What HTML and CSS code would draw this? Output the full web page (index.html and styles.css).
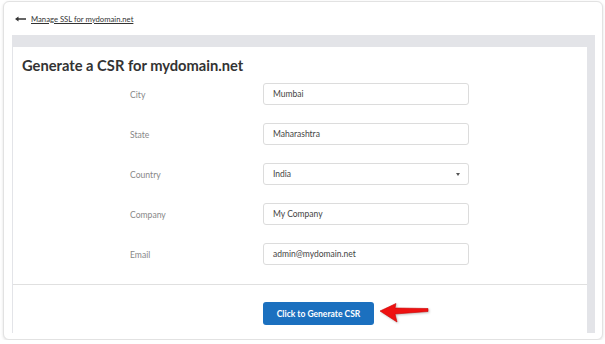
FILE: index.html
```html
<!DOCTYPE html>
<html lang="en">
<head>
  <meta charset="UTF-8" />
  <meta name="viewport" content="width=device-width, initial-scale=1.0"/>
  <title>Generate a CSR</title>
  <link rel="stylesheet" href="styles.css">
</head>
<body>
  <div class="card">
    <div class="back">
      <svg class="back-arrow" width="11" height="6" viewBox="0 0 11 6">
        <path d="M0 3 L3.5 0.5 L3.5 2.2 L11 2.2 L11 3.8 L3.5 3.8 L3.5 5.5 Z" fill="#333"/>
      </svg>
      <a href="#" class="back-link">Manage SSL for mydomain.net</a>
    </div>

    <div class="panel">
      <div class="sheet">
        <h1>Generate a CSR for mydomain.net</h1>

        <form class="csr-form">
          <label>City</label>
          <div class="field">Mumbai</div>

          <label>State</label>
          <div class="field">Maharashtra</div>

          <label>Country</label>
          <div class="field select">India <span class="caret"></span></div>

          <label>Company</label>
          <div class="field">My Company</div>

          <label>Email</label>
          <div class="field">admin@mydomain.net</div>
        </form>

        <div class="actions">
          <button class="generate">Click to Generate CSR</button>
          <svg class="pointer" width="50" height="22" viewBox="0 0 50 22">
            <path d="M0 9 L16 1.5 L15 6 L48 6.5 L48 9.5 L15 12 L17 20 Z" fill="#ee1111" stroke="#c00" stroke-width="0.6" stroke-linejoin="round"/>
          </svg>
        </div>
      </div>
    </div>
  </div>
</body>
</html>
```

FILE: styles.css
```css
* {
  margin: 0;
  padding: 0;
  box-sizing: border-box;
}
body {
  background-color: #fff;
  font-family: Lato, "Open Sans", sans-serif;
}
.card {
  width: 600px;
  height: 339px;
  margin: 1px 0 0 3px;
  border: 1px solid #e2e2e2;
  border-radius: 6px;
  box-shadow: 0 1px 3px rgba(0,0,0,0.12);
  background: #fff;
  display: flex;
  flex-direction: column;
}
.back {
  height: 33px;
  display: flex;
  align-items: center;
  padding-left: 11px;
  gap: 5px;
}
.back-link {
  font-size: 7.7px;
  color: #333;
  text-decoration: underline;
}
.panel {
  margin: 0 7px 0 8px;
  height: 298px;
  background: #e3e4e8;
  padding: 12px 8px 0 1px;
}
.sheet {
  background: #fff;
  height: 100%;
}
h1 {
  font-size: 14.7px;
  font-weight: 700;
  color: #333;
  line-height: 24px;
  padding: 6px 0 0 9px;
}
.csr-form {
  display: grid;
  grid-template-columns: 133px 206px;
  grid-auto-rows: 22px;
  row-gap: 18px;
  padding: 6px 0 19px 117px;
  border-bottom: 1px solid #e0e0e0;
  align-items: center;
}
.csr-form label {
  font-size: 8.6px;
  color: #888;
  padding-top: 1px;
}
.field {
  height: 22px;
  border: 1px solid #dcdcdc;
  border-radius: 3px;
  font-size: 8.5px;
  color: #444;
  padding-left: 9px;
  display: flex;
  align-items: center;
}
.select {
  justify-content: space-between;
  padding-right: 8px;
}
.caret {
  width: 0;
  height: 0;
  border-left: 2.5px solid transparent;
  border-right: 2.5px solid transparent;
  border-top: 3px solid #555;
}
.actions {
  display: flex;
  align-items: flex-start;
  padding: 17px 0 0 250px;
}
.generate {
  width: 111px;
  height: 23px;
  background: #1b70bf;
  color: #fff;
  font-family: Lato, sans-serif;
  font-weight: 700;
  font-size: 8.5px;
  border: none;
  border-radius: 3px;
}
.pointer {
  margin: 0 0 0 6px;
  filter: drop-shadow(1px 1px 1px rgba(0,0,0,0.25));
}
```
